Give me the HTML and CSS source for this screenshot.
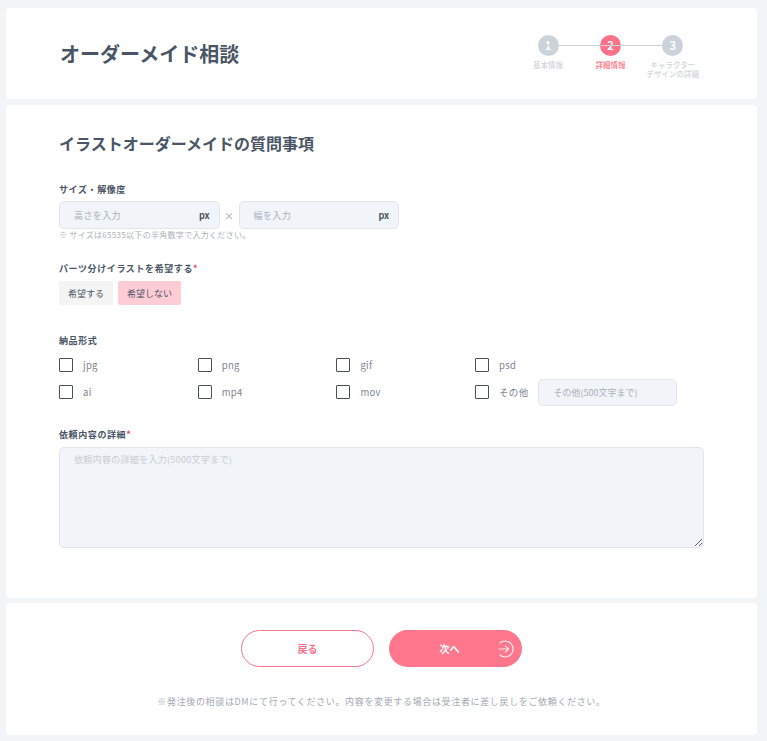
FILE: index.html
```html
<!DOCTYPE html>
<html lang="ja">
<head>
  <meta charset="UTF-8">
  <title>オーダーメイド相談</title>
  <meta name="viewport" content="width=device-width, initial-scale=1.0" />
  <link rel="stylesheet" href="styles.css">
</head>
<body>
  <div class="card header-card">
    <h1>オーダーメイド相談</h1>
    <div class="steps">
      <div class="step">
        <span class="step-num">1</span>
        <span class="step-label">基本情報</span>
      </div>
      <div class="step active">
        <span class="step-num">2</span>
        <span class="step-label">詳細情報</span>
      </div>
      <div class="step">
        <span class="step-num">3</span>
        <span class="step-label">キャラクター<br>デザインの詳細</span>
      </div>
    </div>
  </div>

  <div class="card form-card">
    <h2>イラストオーダーメイドの質問事項</h2>

    <div class="field size-field">
      <label class="label">サイズ・解像度</label>
      <div class="size-row">
        <div class="px-input">
          <input type="text" placeholder="高さを入力">
          <span>px</span>
        </div>
        <span class="times">×</span>
        <div class="px-input">
          <input type="text" placeholder="幅を入力">
          <span>px</span>
        </div>
      </div>
      <p class="note">※ サイズは65535以下の半角数字で入力ください。</p>
    </div>

    <div class="field parts-field">
      <label class="label">パーツ分けイラストを希望する<em>*</em></label>
      <div class="choice-row">
        <button class="choice">希望する</button>
        <button class="choice selected">希望しない</button>
      </div>
    </div>

    <div class="field format-field">
      <label class="label">納品形式</label>
      <div class="format-grid">
        <label class="check"><i></i>jpg</label>
        <label class="check"><i></i>png</label>
        <label class="check"><i></i>gif</label>
        <label class="check"><i></i>psd</label>
        <label class="check"><i></i>ai</label>
        <label class="check"><i></i>mp4</label>
        <label class="check"><i></i>mov</label>
        <div class="check other"><i></i>その他<input type="text" placeholder="その他(500文字まで)"></div>
      </div>
    </div>

    <div class="field detail-field">
      <label class="label">依頼内容の詳細<em>*</em></label>
      <textarea placeholder="依頼内容の詳細を入力(5000文字まで)"></textarea>
    </div>
  </div>

  <div class="card footer-card">
    <div class="buttons">
      <button class="btn back">戻る</button>
      <button class="btn next">次へ
        <svg class="next-icon" width="18" height="18" viewBox="0 0 18 18" fill="none" stroke="#ffe9ee" stroke-width="1.2">
          <path d="M3.6 3.2A8 8 0 1 1 3.6 14.8"/>
          <path d="M2.5 9H12.5M9.2 5.7L12.5 9L9.2 12.3"/>
        </svg>
      </button>
    </div>
    <p class="footer-note">※発注後の相談はDMにて行ってください。内容を変更する場合は受注者に差し戻しをご依頼ください。</p>
  </div>
</body>
</html>
```

FILE: styles.css
```css
* {
  box-sizing: border-box;
}

body {
  margin: 0;
  padding: 8px 10px 6px 6px;
  font-family: "Noto Sans CJK JP", "Noto Sans", sans-serif;
  background-color: #f1f5f8;
  color: #4a5565;
}

.card {
  background: #fff;
  border-radius: 4px;
}

.header-card {
  height: 91px;
  padding: 0 54px;
  display: flex;
  justify-content: space-between;
  margin-bottom: 6px;
}

h1 {
  margin: 27px 0 0;
  font-size: 20px;
  line-height: 38px;
  font-weight: 700;
}

.steps {
  display: flex;
  margin: 27px -1px 0 0;
}

.step {
  width: 62.4px;
  position: relative;
  text-align: center;
}

.step + .step::before {
  content: "";
  position: absolute;
  top: 10px;
  left: -41px;
  width: 62px;
  height: 1px;
  background: #ccd2da;
}

.step-num {
  position: relative;
  display: block;
  width: 21px;
  height: 21px;
  margin: 0 auto;
  border-radius: 50%;
  background: #ccd2da;
  color: #fff;
  font-size: 11px;
  font-weight: 700;
  line-height: 21px;
}

.step-label {
  display: block;
  margin-top: 4px;
  font-size: 7.5px;
  line-height: 9px;
  font-weight: 500;
  color: #d0d4da;
  white-space: nowrap;
}

.step.active .step-num {
  background: #fe7289;
}

.step.active .step-label {
  color: #fe7289;
}

.form-card {
  height: 493px;
  padding: 25px 53px 0;
  margin-bottom: 5px;
}

h2 {
  margin: 0;
  font-size: 16px;
  line-height: 26px;
  font-weight: 700;
}

.label {
  display: block;
  font-size: 9px;
  line-height: 14px;
  font-weight: 700;
  letter-spacing: 0.6px;
}

.label em {
  color: #f0355a;
  font-style: normal;
}

.size-field {
  margin-top: 27px;
}

.size-row {
  display: flex;
  align-items: center;
  margin-top: 4px;
}

.px-input {
  width: 160.5px;
  height: 28px;
  display: flex;
  align-items: center;
  padding: 0 9px 0 14px;
  background: #f1f4f8;
  border: 1px solid #e2e6ea;
  border-radius: 5px;
}

.px-input input {
  flex: 1;
  min-width: 0;
  border: none;
  padding: 0;
  background: none;
  font: inherit;
  font-size: 9px;
  letter-spacing: 0.4px;
}

.px-input span {
  font-size: 9px;
  font-weight: 700;
}

input::placeholder {
  color: #a9b0b8;
  opacity: 1;
}

textarea::placeholder {
  color: #c8cdd3;
  opacity: 1;
}

.times {
  width: 19px;
  text-align: center;
  font-size: 10px;
  color: #a0a7b0;
}

.note {
  margin: 0;
  font-size: 8px;
  line-height: 11px;
  color: #aab0b8;
  letter-spacing: 0.3px;
}

.parts-field {
  margin-top: 22px;
}

.choice-row {
  display: flex;
  gap: 5px;
  margin-top: 5px;
}

.choice {
  height: 24px;
  width: 54px;
  padding: 0;
  border: none;
  border-radius: 2px;
  background: #f4f4f4;
  color: #4a5565;
  font: inherit;
  font-size: 9px;
}

.choice.selected {
  background: #ffccd6;
  width: 63px;
}

.format-field {
  margin-top: 29px;
}

.format-grid {
  display: grid;
  grid-template-columns: repeat(4, 138.7px);
  grid-auto-rows: 27px;
  margin-top: 3px;
  align-items: center;
}

.check {
  display: flex;
  align-items: center;
  font-size: 9.5px;
  color: #7d8590;
  letter-spacing: 0.3px;
  white-space: nowrap;
}

.check i {
  flex: none;
  width: 14px;
  height: 14px;
  margin-right: 10px;
  border: 1px solid #4a4f58;
  border-radius: 1px;
}

.other input {
  flex: none;
  width: 139px;
  height: 27px;
  margin: 2px 0 0 10px;
  padding: 0 14px;
  border: 1px solid #e2e6ea;
  border-radius: 5px;
  background: #f1f4f8;
  font: inherit;
  font-size: 9px;
}

.detail-field {
  margin-top: 23px;
}

textarea {
  display: block;
  width: 645px;
  height: 101px;
  margin-top: 5px;
  padding: 5px 14px;
  border: 1px solid #e2e6ea;
  border-radius: 5px;
  background: #f1f4f8;
  font: inherit;
  font-size: 9px;
  letter-spacing: 0.3px;
}

.footer-card {
  height: 132px;
  padding-top: 27px;
}

.buttons {
  display: flex;
  justify-content: center;
  gap: 15px;
}

.btn {
  width: 133px;
  height: 37px;
  border-radius: 19px;
  font: inherit;
  font-size: 10px;
  font-weight: 700;
}

.back {
  background: #fff;
  border: 1px solid #f2788f;
  color: #fe7289;
}

.next {
  position: relative;
  padding: 0 12px 0 0;
  background: #fe778d;
  border: none;
  color: #fff;
}

.next-icon {
  position: absolute;
  right: 8px;
  top: 10px;
}

.footer-note {
  margin: 28px 0 0;
  text-align: center;
  font-size: 9px;
  line-height: 14px;
  color: #a3a9b1;
  letter-spacing: 0.65px;
}
```
